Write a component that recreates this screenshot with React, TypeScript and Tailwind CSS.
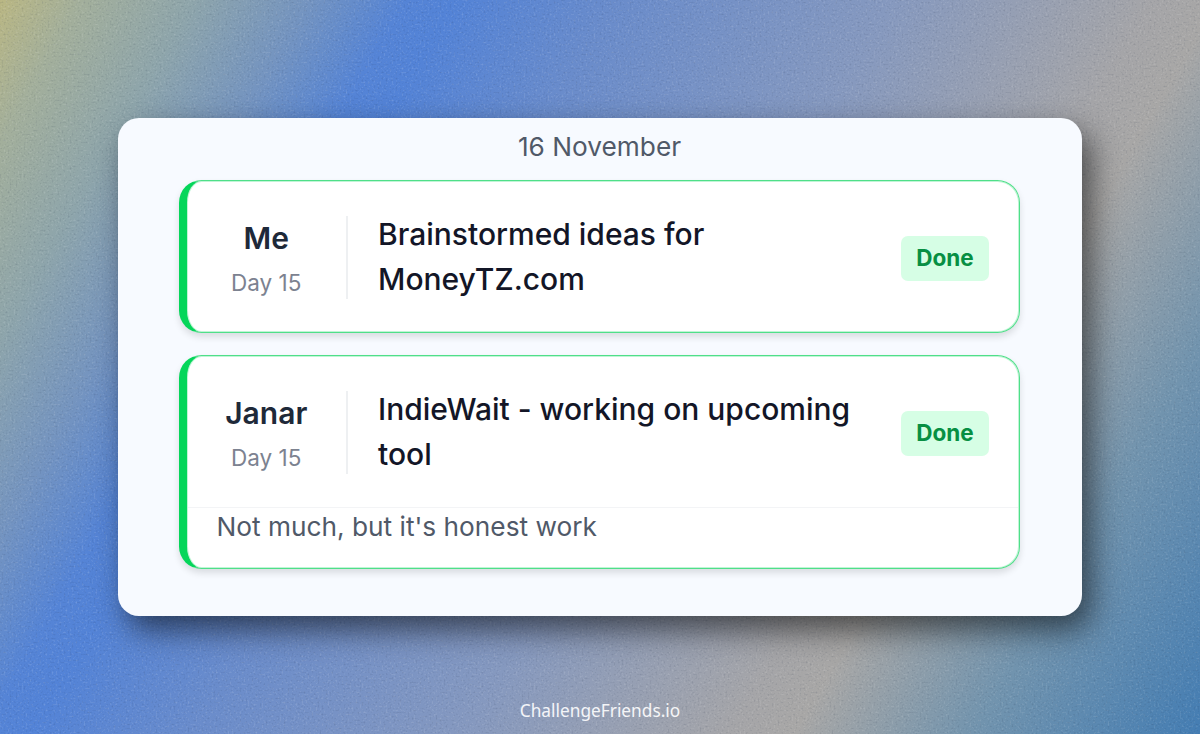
import clsx from "clsx";

type Entry = {
  name: string;
  day: number;
  title: string;
  note?: string;
};

const entries: Entry[] = [
  { name: "Me", day: 15, title: "Brainstormed ideas for MoneyTZ.com" },
  {
    name: "Janar",
    day: 15,
    title: "IndieWait - working on upcoming tool",
    note: "Not much, but it's honest work",
  },
];

const Grain = () => (
  <svg className="absolute inset-0 h-full w-full" aria-hidden="true">
    <filter id="light-grain" colorInterpolationFilters="sRGB">
      <feTurbulence type="fractalNoise" baseFrequency="0.5" numOctaves="2" seed="4" />
      <feColorMatrix values="0 0 0 0 1  0 0 0 0 1  0 0 0 0 1  2 0 0 0 -1.1" />
    </filter>
    <filter id="dark-grain" colorInterpolationFilters="sRGB">
      <feTurbulence type="fractalNoise" baseFrequency="0.5" numOctaves="2" seed="11" />
      <feColorMatrix values="0 0 0 0 0.1  0 0 0 0 0.15  0 0 0 0 0.25  2 0 0 0 -1.1" />
    </filter>
    <rect width="100%" height="100%" filter="url(#light-grain)" opacity="0.25" />
    <rect width="100%" height="100%" filter="url(#dark-grain)" opacity="0.22" />
  </svg>
);

const EntryCard = ({ name, day, title, note }: Entry) => {
  return (
    <article
      className={clsx(
        "rounded-[22.5px] border border-l-8 border-[#4fdf89] border-l-[#05d65a] bg-white",
        "shadow-[0_4px_7px_rgba(0,0,0,0.12),inset_0_0_0_1px_rgba(5,214,90,0.25)]",
      )}
    >
      <div className="flex items-center pt-[31px] pr-[30px] pb-[30px] pl-[31px]">
        <div className="mt-px flex h-[83px] w-[130px] shrink-0 flex-col items-center border-r-2 border-[#eef0f2] pr-[31.5px]">
          <span className="text-[30px] leading-[45px] font-semibold text-[#1e2939]">{name}</span>
          <span className="mt-[7px] text-[22.5px] leading-[30px] text-[#7c8290]">Day {day}</span>
        </div>
        <h2 className="flex-1 px-[30px] text-[30px] leading-[45px] font-medium text-[#131627]">
          {title}
        </h2>
        <span className="mt-[3px] flex h-[45px] w-[88px] shrink-0 items-center justify-center rounded-[7px] bg-[#d6fee5] text-[22.5px] font-[670] text-[#078f43]">
          Done
        </span>
      </div>
      {note && (
        <p className="mx-px border-t border-[#f3f4f6] px-[28.5px] pb-[23px] text-[26.25px] leading-[37.5px] text-[#505968]">
          {note}
        </p>
      )}
    </article>
  );
};

const App = () => {
  return (
    <main className="relative flex h-[734px] w-[1200px] flex-col items-center overflow-hidden bg-[linear-gradient(120deg,#bab783_0%,#a3af9b_5%,#8ea5ab_12%,#7494c0_19%,#5584d6_25%,#5383d7_28%,#6a8ccb_38%,#8699bf_55%,#a5a5a8_71%,#a8a7a6_75%,#7294ae_86%,#447db3_100%)] pt-[118px] font-['Inter',sans-serif]">
      <Grain />

      <section className="relative h-[498px] w-[964px] rounded-[21px] bg-[#f7faff] pt-[10px] pr-[62px] pl-[61px] shadow-[9px_14px_31px_rgba(0,0,0,0.56)]">
        <p className="text-center text-[26.25px] leading-[37.5px] text-[#505968]">16 November</p>
        <div className="mt-[14px] flex flex-col gap-[22px]">
          {entries.map((entry) => (
            <EntryCard key={entry.name} {...entry} />
          ))}
        </div>
      </section>

      <footer className="relative mt-[83px] font-['Noto_Sans',sans-serif] text-[17.3px] leading-6 text-white/90">
        ChallengeFriends.io
      </footer>
    </main>
  );
};

export default App;
